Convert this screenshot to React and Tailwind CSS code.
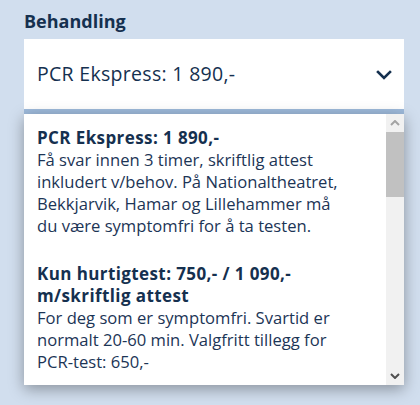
export default function App() {
  const font = { fontFamily: "'Open Sans', Lato, sans-serif" };
  return (
    <div className="w-[420px] h-[405px] bg-[#d1deee] overflow-hidden" style={font}>
      <div className="pl-[24px] pr-[16px] pt-[9px]">
        <div className="text-[18px] leading-[24px] font-bold text-[#15304f] mb-[6px]">Behandling</div>
        <div className="relative">
          <div className="h-[75px] bg-white border-b-[5px] border-[#9ebadb] flex items-center justify-between pl-[13px] pr-[12px]">
            <span className="text-[19.5px] tracking-[0.3px] text-[#15304f]">PCR Ekspress: 1 890,-</span>
            <svg width="16" height="10" viewBox="0 0 16 10" className="mt-[2px]">
              <path d="M2 2 L8 8 L14 2" fill="none" stroke="#15304f" strokeWidth="2.6" strokeLinecap="square" />
            </svg>
          </div>
          <div className="bg-white h-[271px] flex shadow-[0_4px_14px_rgba(0,0,0,0.35)]">
            <div className="flex-1 overflow-hidden text-[16.6px] leading-[22px] text-[#1c3556] whitespace-nowrap">
              <div className="px-[13px] py-[13px]">
                <div className="font-bold text-[17px] tracking-[0.4px] text-[#15304f]">PCR Ekspress: 1 890,-</div>
                <div>Få svar innen 3 timer, skriftlig attest<br />inkludert v/behov. På Nationaltheatret,<br />Bekkjarvik, Hamar og Lillehammer må<br />du være symptomfri for å ta testen.</div>
              </div>
              <div className="px-[13px] py-[13px]">
                <div className="font-bold text-[17px] tracking-[0.4px] text-[#15304f]">Kun hurtigtest: 750,- / 1 090,-<br />m/skriftlig attest</div>
                <div>For deg som er symptomfri. Svartid er<br />normalt 20-60 min. Valgfritt tillegg for<br />PCR-test: 650,-</div>
              </div>
            </div>
            <div className="w-[18px] bg-[#f1f1f1] flex flex-col">
              <div className="h-[18px] flex items-center justify-center">
                <svg width="10" height="6" viewBox="0 0 10 6"><path d="M1 5 L5 1 L9 5" fill="none" stroke="#a3a3a3" strokeWidth="2" /></svg>
              </div>
              <div className="mx-0 h-[65px] bg-[#c1c1c1]"></div>
              <div className="flex-1"></div>
              <div className="h-[18px] flex items-center justify-center">
                <svg width="10" height="6" viewBox="0 0 10 6"><path d="M1 1 L5 5 L9 1" fill="none" stroke="#505050" strokeWidth="2" /></svg>
              </div>
            </div>
          </div>
        </div>
      </div>
    </div>
  );
}
